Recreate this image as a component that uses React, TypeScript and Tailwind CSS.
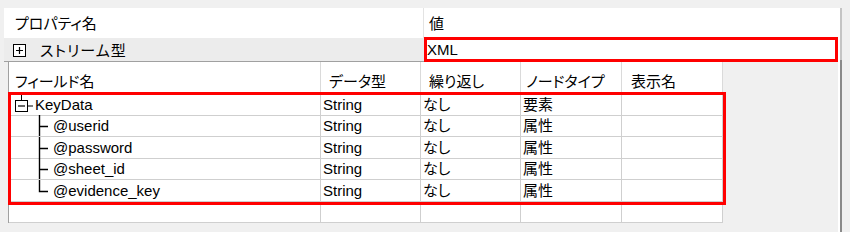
const cols = [
  { label: 'フィールド名', w: 'w-[312px]', pl: 'pl-[6px]' },
  { label: 'データ型', w: 'w-[100px]', pl: 'pl-[8px]' },
  { label: '繰り返し', w: 'w-[100px]', pl: 'pl-[8px]' },
  { label: 'ノードタイプ', w: 'w-[101px]', pl: 'pl-[5px]' },
  { label: '表示名', w: 'w-[101px]', pl: 'pl-[9px]' },
]

type Row = { name: string; type: string; rep: string; node: string; kind: 'root' | 'mid' | 'last' | 'empty' }

const rows: Row[] = [
  { name: 'KeyData', type: 'String', rep: 'なし', node: '要素', kind: 'root' },
  { name: '@userid', type: 'String', rep: 'なし', node: '属性', kind: 'mid' },
  { name: '@password', type: 'String', rep: 'なし', node: '属性', kind: 'mid' },
  { name: '@sheet_id', type: 'String', rep: 'なし', node: '属性', kind: 'mid' },
  { name: '@evidence_key', type: 'String', rep: 'なし', node: '属性', kind: 'last' },
  { name: '', type: '', rep: '', node: '', kind: 'empty' },
]

function PlusBox() {
  return (
    <svg width="13" height="13" viewBox="0 0 13 13" className="shrink-0">
      <rect x="0.5" y="0.5" width="12" height="12" fill="white" stroke="#000" />
      <path d="M3 6.5H10M6.5 3V10" stroke="#000" strokeWidth="1.2" />
    </svg>
  )
}

function TreeMark({ kind }: { kind: Row['kind'] }) {
  if (kind === 'root') {
    return (
      <svg width="19" height="21" viewBox="0 0 19 21" className="shrink-0">
        <path d="M6.5 0V6" stroke="#000" />
        <rect x="0.5" y="6.5" width="12" height="11" fill="white" stroke="#000" />
        <path d="M3 12H10" stroke="#000" strokeWidth="1.2" />
        <path d="M12.5 12H18" stroke="#000" />
      </svg>
    )
  }
  if (kind === 'empty') return null
  return (
    <svg width="11" height="21" viewBox="0 0 11 21" className="shrink-0">
      <path d={kind === 'last' ? 'M1.5 0V11.5H10' : 'M1.5 0V21M1.5 11.5H10'} stroke="#000" strokeWidth="1.4" fill="none" />
    </svg>
  )
}

export default function App() {
  return (
    <div
      className="w-[850px] h-[232px] bg-[#f0f0f0] flex flex-col overflow-hidden text-[15px] text-black leading-none [font-feature-settings:'palt']"
      style={{ fontFamily: '"Liberation Sans", "Noto Sans CJK JP", sans-serif' }}
    >
      <div className="h-[8px] shrink-0" />
      <div className="flex flex-1 min-h-0">
        <div className="w-[4px] shrink-0" />
        <div className="w-[834px] flex flex-col bg-white">
          {/* property header */}
          <div className="h-[30px] flex shrink-0">
            <div className="w-[420px] border-r border-[#e3e3e3] flex items-center pl-[11px] pt-[1px]">プロパティ名</div>
            <div className="flex-1 flex items-center pl-[5px] pt-[1px]">値</div>
          </div>
          {/* stream row */}
          <div className="h-[23px] flex shrink-0">
            <div className="w-[420px] bg-[#ececec] flex items-center gap-[14px] pl-[9px] pt-[1px]">
              <PlusBox />
              <span className="tracking-[1px]">ストリーム型</span>
            </div>
            <div className="flex-1 relative flex items-center pl-[3px]">
              XML
              <div className="absolute left-0 right-0 -top-[1px] -bottom-[1px] border-[3px] border-[#ff0000]" />
            </div>
          </div>
          {/* field table area */}
          <div className="flex-1 flex bg-[#f0f0f0] border-t border-[#a0a0a0]">
            <div className="w-[4px] shrink-0" />
            <div className="flex flex-col self-start border-l border-[#a0a0a0]">
              <div className="h-[32px] flex bg-white">
                {cols.map((c) => (
                  <div key={c.label} className={`${c.w} ${c.pl} border-r border-[#dadada] flex items-center pt-[6px]`}>
                    {c.label}
                  </div>
                ))}
              </div>
              <div className="relative">
                {rows.map((r, i) => (
                  <div key={i} className="h-[21.5px] flex bg-white border-b border-[#cfcfcf]">
                    <div className="w-[312px] border-r border-[#cfcfcf] flex items-center">
                      {r.kind === 'root' && (
                        <div className="flex items-center pl-[6px] gap-[1px]">
                          <TreeMark kind="root" />
                          <span>{r.name}</span>
                        </div>
                      )}
                      {(r.kind === 'mid' || r.kind === 'last') && (
                        <div className="flex items-center pl-[29px] gap-[4px]">
                          <TreeMark kind={r.kind} />
                          <span>{r.name}</span>
                        </div>
                      )}
                    </div>
                    <div className="w-[100px] border-r border-[#cfcfcf] flex items-center pl-[2px]">{r.type}</div>
                    <div className="w-[100px] border-r border-[#cfcfcf] flex items-center pl-[2px]">{r.rep}</div>
                    <div className="w-[101px] border-r border-[#cfcfcf] flex items-center pl-[2px]">{r.node}</div>
                    <div className="w-[101px] border-r border-[#cfcfcf]" />
                  </div>
                ))}
                <div className="absolute -left-[1px] -top-[2px] w-[718px] h-[113px] border-[3px] border-[#ff0000]" />
              </div>
            </div>
          </div>
        </div>
        <div className="w-[2px] shrink-0 bg-white" />
        <div className="w-[2px] shrink-0 flex flex-col">
          <div className="h-[52px] bg-[#c4c4c4]" />
          <div className="flex-1 bg-[#8a8a8a]" />
        </div>
      </div>
    </div>
  )
}
